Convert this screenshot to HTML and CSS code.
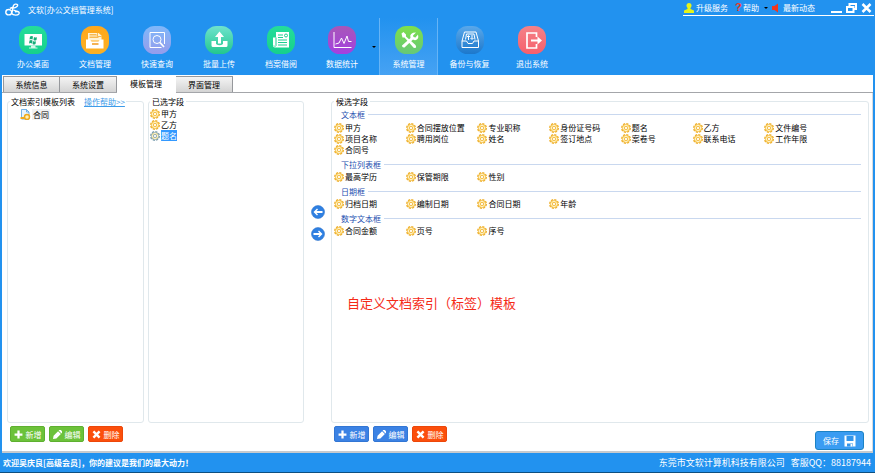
FILE: index.html
```html
<!DOCTYPE html>
<html lang="zh-CN">
<head>
  <meta charset="UTF-8">
  <meta name="viewport" content="width=device-width, initial-scale=1">
  <title>文软[办公文档管理系统]</title>
  <link rel="stylesheet" href="styles.css">
</head>
<body>
  <svg class="defs" aria-hidden="true">
    <defs>
      <linearGradient id="g-mint" x1="0" y1="0" x2="0" y2="1"><stop offset="0" stop-color="#6fe3cd"/><stop offset="1" stop-color="#22c78f"/></linearGradient>
      <linearGradient id="g-green" x1="0" y1="0" x2="0" y2="1"><stop offset="0" stop-color="#25dd9a"/><stop offset="1" stop-color="#16d08c"/></linearGradient>
      <linearGradient id="g-orange" x1="0" y1="0" x2="0" y2="1"><stop offset="0" stop-color="#ffa81c"/><stop offset="1" stop-color="#fbb024"/></linearGradient>
      <linearGradient id="g-violet" x1="0" y1="0" x2="0" y2="1"><stop offset="0" stop-color="#7fb8fa"/><stop offset="1" stop-color="#969cec"/></linearGradient>
      <linearGradient id="g-purple" x1="0" y1="0" x2="0" y2="1"><stop offset="0" stop-color="#a857b8"/><stop offset="1" stop-color="#a43fe0"/></linearGradient>
      <linearGradient id="g-lime" x1="0" y1="0" x2="0" y2="1"><stop offset="0" stop-color="#7fe04a"/><stop offset="1" stop-color="#66c878"/></linearGradient>
      <linearGradient id="g-blue" x1="0" y1="0" x2="0" y2="1"><stop offset="0" stop-color="#5aa8ea"/><stop offset="1" stop-color="#1c78cc"/></linearGradient>
      <linearGradient id="g-red" x1="0" y1="0" x2="0" y2="1"><stop offset="0" stop-color="#f48288"/><stop offset="1" stop-color="#f65f6c"/></linearGradient>
      <symbol id="gear" viewBox="0 0 20 20">
        <circle cx="10" cy="10" r="8.5" fill="none" stroke="currentColor" stroke-width="3" stroke-dasharray="4.2 2.4"/>
        <circle cx="10" cy="10" r="7.5" fill="#ffe9a0" stroke="currentColor" stroke-width="1.6"/>
        <circle cx="10" cy="10" r="3.2" fill="#fff" stroke="currentColor" stroke-width="1.6"/>
        <path d="M10 3v3M10 14v3M3 10h3M14 10h3" stroke="#fff" stroke-width="1.5"/>
      </symbol>
      <symbol id="plus" viewBox="0 0 16 16"><path d="M6 1h4v5h5v4h-5v5H6v-5H1V6h5z" fill="#fff"/></symbol>
      <symbol id="pencil" viewBox="0 0 16 16"><path d="M0 16l1-6 8-8 5 5-8 8zM10 1l1-1h3l2 2v3l-1 1z" fill="#fff"/></symbol>
      <symbol id="cross" viewBox="0 0 16 16"><path d="M1 4l3-3 4 4 4-4 3 3-4 4 4 4-3 3-4-4-4 4-3-3 4-4z" fill="#fff"/></symbol>
      <symbol id="arrow" viewBox="0 0 28 28">
        <circle cx="14" cy="14" r="13" fill="#2f80e2" stroke="#2068c6" stroke-width="1"/>
        <path d="M5 14l7-7 2 2-3 3h12v4H11l3 3-2 2z" fill="#fff"/>
      </symbol>
    </defs>
  </svg>

  <div class="window">
    <header class="header">
      <div class="titlebar">
        <svg class="logo" viewBox="0 0 28 24" fill="none" stroke="#fff" stroke-width="2.6">
          <ellipse cx="7" cy="17" rx="5.5" ry="5"/>
          <path d="M12 19C17 13 12 3 19 2c6-1 6 4 1 6-4 2-8 1-8 1M12 19c4 5 12 4 14 1 2-4-3-6-7-3M16 13l10 4M9 10l5-2"/>
        </svg>
        <h1 class="title">文软[办公文档管理系统]</h1>
        <div class="system">
          <a class="sys-link" href="#">
            <svg class="sys-icon" viewBox="0 0 20 20"><circle cx="10" cy="5" r="5" fill="#e6f31a"/><path d="M7 8h6v4l7 3v5H0v-5l7-3z" fill="#e6f31a"/></svg>升级服务</a>
          <a class="sys-link help-link" href="#"><span class="question">?</span>帮助<span class="caret"></span></a>
          <a class="sys-link" href="#">
            <svg class="sys-icon small" viewBox="0 0 16 20"><path d="M0 6h5l7-5v18l-7-5H0z" fill="#f2371d"/></svg>最新动态</a>
          <span class="window-buttons">
            <button class="win-btn" type="button" aria-label="最小化"><svg viewBox="0 0 22 20"><path d="M0 18h22" stroke="#fff" stroke-width="4"/></svg></button>
            <button class="win-btn" type="button" aria-label="还原"><svg viewBox="0 0 22 20" fill="none" stroke="#fff" stroke-width="4"><path d="M7 6V2h13v10h-4"/><path d="M2 8h13v10H2z"/></svg></button>
            <button class="win-btn" type="button" aria-label="关闭"><svg viewBox="0 0 22 20"><path d="M3 2l16 16M19 2L3 18" stroke="#fff" stroke-width="5"/></svg></button>
          </span>
        </div>
      </div>

      <nav class="toolbar">
        <button class="tool" type="button">
          <svg viewBox="0 0 56 56"><rect width="56" height="56" rx="23" fill="url(#g-green)"/><path d="M11 16h35v23H11z" fill="#fff"/><path d="M24 39h9v4h4v2H20v-2h4z" fill="#d5f8ea"/><path d="M22 21q4-2 6 0l-1 6q-3-2-6 0zM30 22q4 2 6 0l-1 6q-3 2-6 0zM21 29q3-2 6 0l-1 6q-3-2-6 0zM28 30q4 2 6 0l-1 6q-3 2-6 0z" fill="#16ad78"/></svg>
          办公桌面</button>
        <button class="tool" type="button">
          <svg viewBox="0 0 56 56"><rect width="56" height="56" rx="23" fill="url(#g-orange)"/><path d="M14 14h21l6 5v10H14z" fill="#fff3d6"/><path d="M17 17h14M17 20h16M17 23h18" stroke="#f4a725" stroke-width="1.5"/><path d="M33 14v7h8" fill="none" stroke="#f4a725" stroke-width="1.5"/><path d="M10 27h8l3 4h14l3-4h7v18H10z" fill="#fff"/><path d="M22 36h13" stroke="#f09a1c" stroke-width="3"/></svg>
          文档管理</button>
        <button class="tool" type="button">
          <svg viewBox="0 0 56 56"><rect width="56" height="56" rx="23" fill="url(#g-violet)"/><g fill="none" stroke="#fff" stroke-width="2"><path d="M37 43H14V13h29v23"/><circle cx="28" cy="27" r="8"/><path d="M34 33l8 9" stroke-width="3.4"/></g></svg>
          快速查询</button>
        <button class="tool" type="button">
          <svg viewBox="0 0 56 56"><rect width="56" height="56" rx="23" fill="url(#g-mint)"/><path d="M29 11l9 11h-6v13h-6V22h-6z" fill="#fff"/><path d="M13 30h9v6q7 5 14 0v-6h9v9q0 3-3 3H16q-3 0-3-3z" fill="#fff"/></svg>
          批量上传</button>
        <button class="tool" type="button">
          <svg viewBox="0 0 56 56"><rect width="56" height="56" rx="23" fill="url(#g-green)"/><path d="M18 12h26v31H16q-4 0-4-4V23h6z" fill="#fff"/><path d="M18 23v16q-2 4-4 0" fill="none" stroke="#1dcf91" stroke-width="2"/><path d="M22 18h10M22 23h10M22 28h18M22 33h18M22 38h18" stroke="#1dcf91" stroke-width="2"/><circle cx="38" cy="19" r="3" fill="none" stroke="#1dcf91" stroke-width="2"/></svg>
          档案借阅</button>
        <button class="tool wide" type="button">
          <svg viewBox="0 0 56 56"><rect width="56" height="56" rx="23" fill="url(#g-purple)"/><path d="M12 12v31h35M15 36l7-2 5-10 5 11 6-15 3 11h6" fill="none" stroke="#fff" stroke-width="2"/></svg>
          数据统计<span class="caret"></span></button>
        <button class="tool active" type="button">
          <svg viewBox="0 0 56 56"><rect width="56" height="56" rx="23" fill="url(#g-lime)"/><path d="M13 15l4-3 5 5v4l19 17q3 5-1 6-3 0-5-3L19 23h-4z" fill="#fff"/><path d="M42 13l-6 6 1 3 4 1 5-6q2 9-4 11-3 1-6-1L19 43q-5 1-5-4l17-15q-3-11 11-11z" fill="#fff"/></svg>
          系统管理</button>
        <button class="tool backup" type="button">
          <svg viewBox="0 0 56 56"><rect width="56" height="56" rx="23" fill="url(#g-blue)"/><g fill="none" stroke="#fff" stroke-width="2"><path d="M17 12h23l5 18v13H12V30z"/><path d="M12 30h9l3 5h9l3-5h9M19 27l2-11h15l2 11"/><path d="M25 28v-8M22 22l3-3 3 3M32 18v8M29 24l3 3 3-3"/></g></svg>
          备份与恢复</button>
        <button class="tool" type="button">
          <svg viewBox="0 0 56 56"><rect width="56" height="56" rx="23" fill="url(#g-red)"/><path d="M37 22v-8H18v30h19v-8" fill="none" stroke="#fff" stroke-width="3.4"/><path d="M26 27h13v-6l9 8-9 8v-6H26z" fill="#fff"/></svg>
          退出系统</button>
      </nav>
    </header>

    <main class="content">
      <nav class="tabs">
        <button class="tab" type="button">系统信息</button>
        <button class="tab" type="button">系统设置</button>
        <button class="tab active" type="button">模板管理</button>
        <button class="tab" type="button">界面管理</button>
      </nav>

      <div class="panels">
        <section class="column templates">
          <fieldset class="group">
            <legend class="legend-row"><span class="legend-text">文档索引模板列表</span><a class="help" href="#">操作帮助&gt;&gt;</a></legend>
            <div class="tree-item">
              <svg class="doc-icon" viewBox="0 0 22 22"><path d="M3 1h10l5 5v14H3z" fill="#e8f4ff" stroke="#4d9be0" stroke-width="1.5"/><path d="M13 1v5h5" fill="none" stroke="#4d9be0" stroke-width="1.5"/><circle cx="14" cy="16" r="5" fill="#fff0b8" stroke="#eda91f" stroke-width="3"/><path d="M1 20h7v-4H1z" fill="#eda91f"/></svg>
              <span class="tree-label">合同</span>
            </div>
          </fieldset>
          <div class="actions">
            <button class="btn green" type="button"><svg><use href="#plus"/></svg>新增</button>
            <button class="btn green" type="button"><svg><use href="#pencil"/></svg>编辑</button>
            <button class="btn red" type="button"><svg><use href="#cross"/></svg>删除</button>
          </div>
        </section>

        <section class="column chosen">
          <fieldset class="group">
            <legend>已选字段</legend>
            <ul class="chosen-list">
              <li class="field"><svg><use href="#gear"/></svg><span>甲方</span></li>
              <li class="field"><svg><use href="#gear"/></svg><span>乙方</span></li>
              <li class="field selected"><svg><use href="#gear"/></svg><span>题名</span></li>
            </ul>
          </fieldset>
        </section>

        <div class="movers">
          <button class="mover" type="button" aria-label="添加"><svg><use href="#arrow"/></svg></button>
          <button class="mover right" type="button" aria-label="移除"><svg><use href="#arrow"/></svg></button>
        </div>

        <section class="column candidates">
          <fieldset class="group">
            <legend>候选字段</legend>
            <h2 class="section-title">文本框</h2>
            <ul class="fields">
              <li class="field"><svg><use href="#gear"/></svg><span>甲方</span></li>
              <li class="field"><svg><use href="#gear"/></svg><span>合同摆放位置</span></li>
              <li class="field"><svg><use href="#gear"/></svg><span>专业职称</span></li>
              <li class="field"><svg><use href="#gear"/></svg><span>身份证号码</span></li>
              <li class="field"><svg><use href="#gear"/></svg><span>题名</span></li>
              <li class="field"><svg><use href="#gear"/></svg><span>乙方</span></li>
              <li class="field"><svg><use href="#gear"/></svg><span>文件编号</span></li>
              <li class="field"><svg><use href="#gear"/></svg><span>项目名称</span></li>
              <li class="field"><svg><use href="#gear"/></svg><span>聘用岗位</span></li>
              <li class="field"><svg><use href="#gear"/></svg><span>姓名</span></li>
              <li class="field"><svg><use href="#gear"/></svg><span>签订地点</span></li>
              <li class="field"><svg><use href="#gear"/></svg><span>案卷号</span></li>
              <li class="field"><svg><use href="#gear"/></svg><span>联系电话</span></li>
              <li class="field"><svg><use href="#gear"/></svg><span>工作年限</span></li>
              <li class="field"><svg><use href="#gear"/></svg><span>合同号</span></li>
            </ul>
            <h2 class="section-title">下拉列表框</h2>
            <ul class="fields">
              <li class="field"><svg><use href="#gear"/></svg><span>最高学历</span></li>
              <li class="field"><svg><use href="#gear"/></svg><span>保管期限</span></li>
              <li class="field"><svg><use href="#gear"/></svg><span>性别</span></li>
            </ul>
            <h2 class="section-title">日期框</h2>
            <ul class="fields">
              <li class="field"><svg><use href="#gear"/></svg><span>归档日期</span></li>
              <li class="field"><svg><use href="#gear"/></svg><span>编制日期</span></li>
              <li class="field"><svg><use href="#gear"/></svg><span>合同日期</span></li>
              <li class="field"><svg><use href="#gear"/></svg><span>年龄</span></li>
            </ul>
            <h2 class="section-title">数字文本框</h2>
            <ul class="fields">
              <li class="field"><svg><use href="#gear"/></svg><span>合同金额</span></li>
              <li class="field"><svg><use href="#gear"/></svg><span>页号</span></li>
              <li class="field"><svg><use href="#gear"/></svg><span>序号</span></li>
            </ul>
            <p class="note">自定义文档索引（标签）模板</p>
          </fieldset>
          <div class="actions">
            <button class="btn blue" type="button"><svg><use href="#plus"/></svg>新增</button>
            <button class="btn blue" type="button"><svg><use href="#pencil"/></svg>编辑</button>
            <button class="btn red" type="button"><svg><use href="#cross"/></svg>删除</button>
            <button class="save" type="button">保存<svg viewBox="0 0 24 24"><path d="M1 1h22v22H1z" fill="#fff"/><path d="M5 2h14v10H5zM6 17h12v6H6z" fill="#3395ea"/><path d="M13 18h4v5h-4z" fill="#fff"/></svg></button>
          </div>
        </section>
      </div>
    </main>

    <footer class="statusbar">
      <strong>欢迎吴庆良[高级会员]，你的建议是我们的最大动力！</strong>
      <span class="company"><span>东莞市文软计算机科技有限公司</span><span>客服QQ：88187944</span></span>
    </footer>
  </div>
</body>
</html>
```
FILE: styles.css
```css
* { box-sizing: border-box; }
body { margin: 0; background: #2292ef; color: #000; font: 8px/11px "Noto Sans CJK SC", sans-serif; }
button { font: inherit; color: inherit; margin: 0; padding: 0; border: 0; background: none; cursor: pointer; white-space: nowrap; }
ul { list-style: none; margin: 0; padding: 0; }
svg { display: block; flex: none; }
.defs { position: absolute; width: 0; height: 0; }
.window { display: flex; flex-direction: column; min-height: 100vh; border-bottom: 1px solid #0d4f80; }

/* title bar */
.header { color: #fff; }
.titlebar { display: flex; align-items: center; height: 18px; padding-left: 5px; }
.logo { width: 15px; height: 13px; }
.title { margin: 0 0 0 8px; font-size: 8px; font-weight: normal; }
.system { display: flex; align-items: center; align-self: flex-start; height: 16px; margin-left: auto; margin-right: 1px; border-bottom: 1px solid #fff; }
.sys-link { display: flex; align-items: center; margin-right: 7px; color: #fff; text-decoration: none; }
.sys-icon { width: 10px; height: 10px; margin: 0 2px 0 1px; }
.sys-icon.small { width: 8px; margin: 0 3px 0 0; }
.help-link { margin-right: 4px; }
.question { width: 8px; color: #f2371d; font: bold 11px/11px "Liberation Sans", sans-serif; }
.caret { margin-left: 5px; border: 2px solid transparent; border-top-color: #000; border-bottom: 0; }
.window-buttons { display: flex; gap: 4px; margin-left: 9px; padding-right: 2px; }
.win-btn svg { width: 11px; height: 10px; }

/* toolbar */
.toolbar { display: flex; height: 57px; padding-left: 2px; }
.tool { position: relative; display: flex; flex-direction: column; align-items: center; gap: 4px; width: 62px; padding-top: 8px; }
.tool svg { width: 28px; height: 28px; }
.tool.wide { width: 67px; padding-right: 7px; }
.tool .caret { position: absolute; right: 3px; top: 28px; }
.tool.active { width: 59px; border: solid #66b4f6; border-width: 0 1px; background: linear-gradient(#2292ef, #46a2f3); }
.tool.backup { width: 63px; }

/* tabs */
.content { flex: 1; display: flex; flex-direction: column; margin: 0 2px; background: #fff; border-bottom: 2px solid #c6cace; }
.tabs { display: flex; align-items: flex-end; height: 18px; padding-left: 1px; border-bottom: 1px solid #a4a6aa; }
.tab { width: 57px; height: 16px; border: 1px solid #96989c; border-bottom: 0; background: linear-gradient(#f4f4f4, #d4d4d4); }
.tab + .tab { border-left: 0; }
.tab.active { width: 59px; height: 18px; margin-bottom: -1px; padding-bottom: 2px; border-color: #fff; background: #fff; }

/* panels */
.panels { flex: 1; display: flex; padding: 3px 3px 1px 5px; border-right: 1px solid #d8dade; }
.column { display: flex; flex-direction: column; }
.group { flex: 1; min-width: 0; margin: 0; padding: 1px 2px; border: 1px solid #e0e8ec; border-radius: 3px; }
legend { padding: 0 2px; }
.actions { display: flex; gap: 4px; height: 27px; padding: 3px 3px 0; }
.templates { flex: 0 0 137px; }
.legend-row { display: flex; gap: 9px; padding: 0 1px; }
.legend-text, .help { background: #fff; }
.help { color: #3d9be9; }
.tree-item { display: flex; align-items: center; height: 12px; padding-left: 10px; }
.doc-icon { width: 11px; height: 11px; }
.tree-label { padding: 0 1px; margin-left: 1px; background: #f2f2f2; }
.chosen { flex: 0 0 156px; margin-left: 4px; padding-bottom: 27px; }
.chosen .group { padding-left: 1px; }
.field { display: flex; align-items: center; height: 11px; white-space: nowrap; }
.field svg { width: 10px; height: 10px; margin-right: 1px; color: #efb02c; }
.selected svg { color: #7c9fb0; }
.selected span { background: #3399ff; color: #fff; }
.movers { flex: 0 0 27px; display: flex; flex-direction: column; align-items: center; gap: 8px; padding-top: 109px; }
.mover svg { width: 14px; height: 14px; }
.mover.right { transform: rotate(180deg); }
.candidates { flex: 1; }
.section-title { display: flex; align-items: center; gap: 3px; height: 13px; margin: 3px 5px 0 7px; color: #1d4fb0; font-size: 8px; font-weight: normal; }
.section-title::after { content: ""; flex: 1; height: 1px; background: #c9d8ef; }
legend + .section-title { margin-top: 0; margin-bottom: 1px; }
.fields { display: grid; grid-template-columns: repeat(7, 1fr); margin-right: 30px; }
.note { margin: 57px 0 0 13px; color: #f52a18; font-size: 13px; line-height: 20px; }

/* buttons */
.btn { display: flex; align-items: center; justify-content: center; gap: 3px; width: 35px; height: 16px; border-radius: 2px; color: #fff; }
.btn svg { width: 9px; height: 9px; }
.green { background: #6cc23a; border: 1px solid #5eb030; }
.blue { background: #3b82e4; border: 1px solid #3276d4; }
.red { background: #fb4f0c; border: 1px solid #ec470a; }
.save { display: flex; align-items: center; justify-content: center; gap: 5px; width: 49px; height: 19px; margin: 5px 2px 0 auto; border: 1px solid #1c82c4; border-radius: 3px; background: #3a9cf2; color: #fff; }
.save svg { width: 12px; height: 12px; }

/* status bar */
.statusbar { display: flex; align-items: center; justify-content: space-between; height: 19px; padding: 0 4px 0 3px; color: #fff; }
.company { display: flex; gap: 6px; font-size: 9px; }
```
